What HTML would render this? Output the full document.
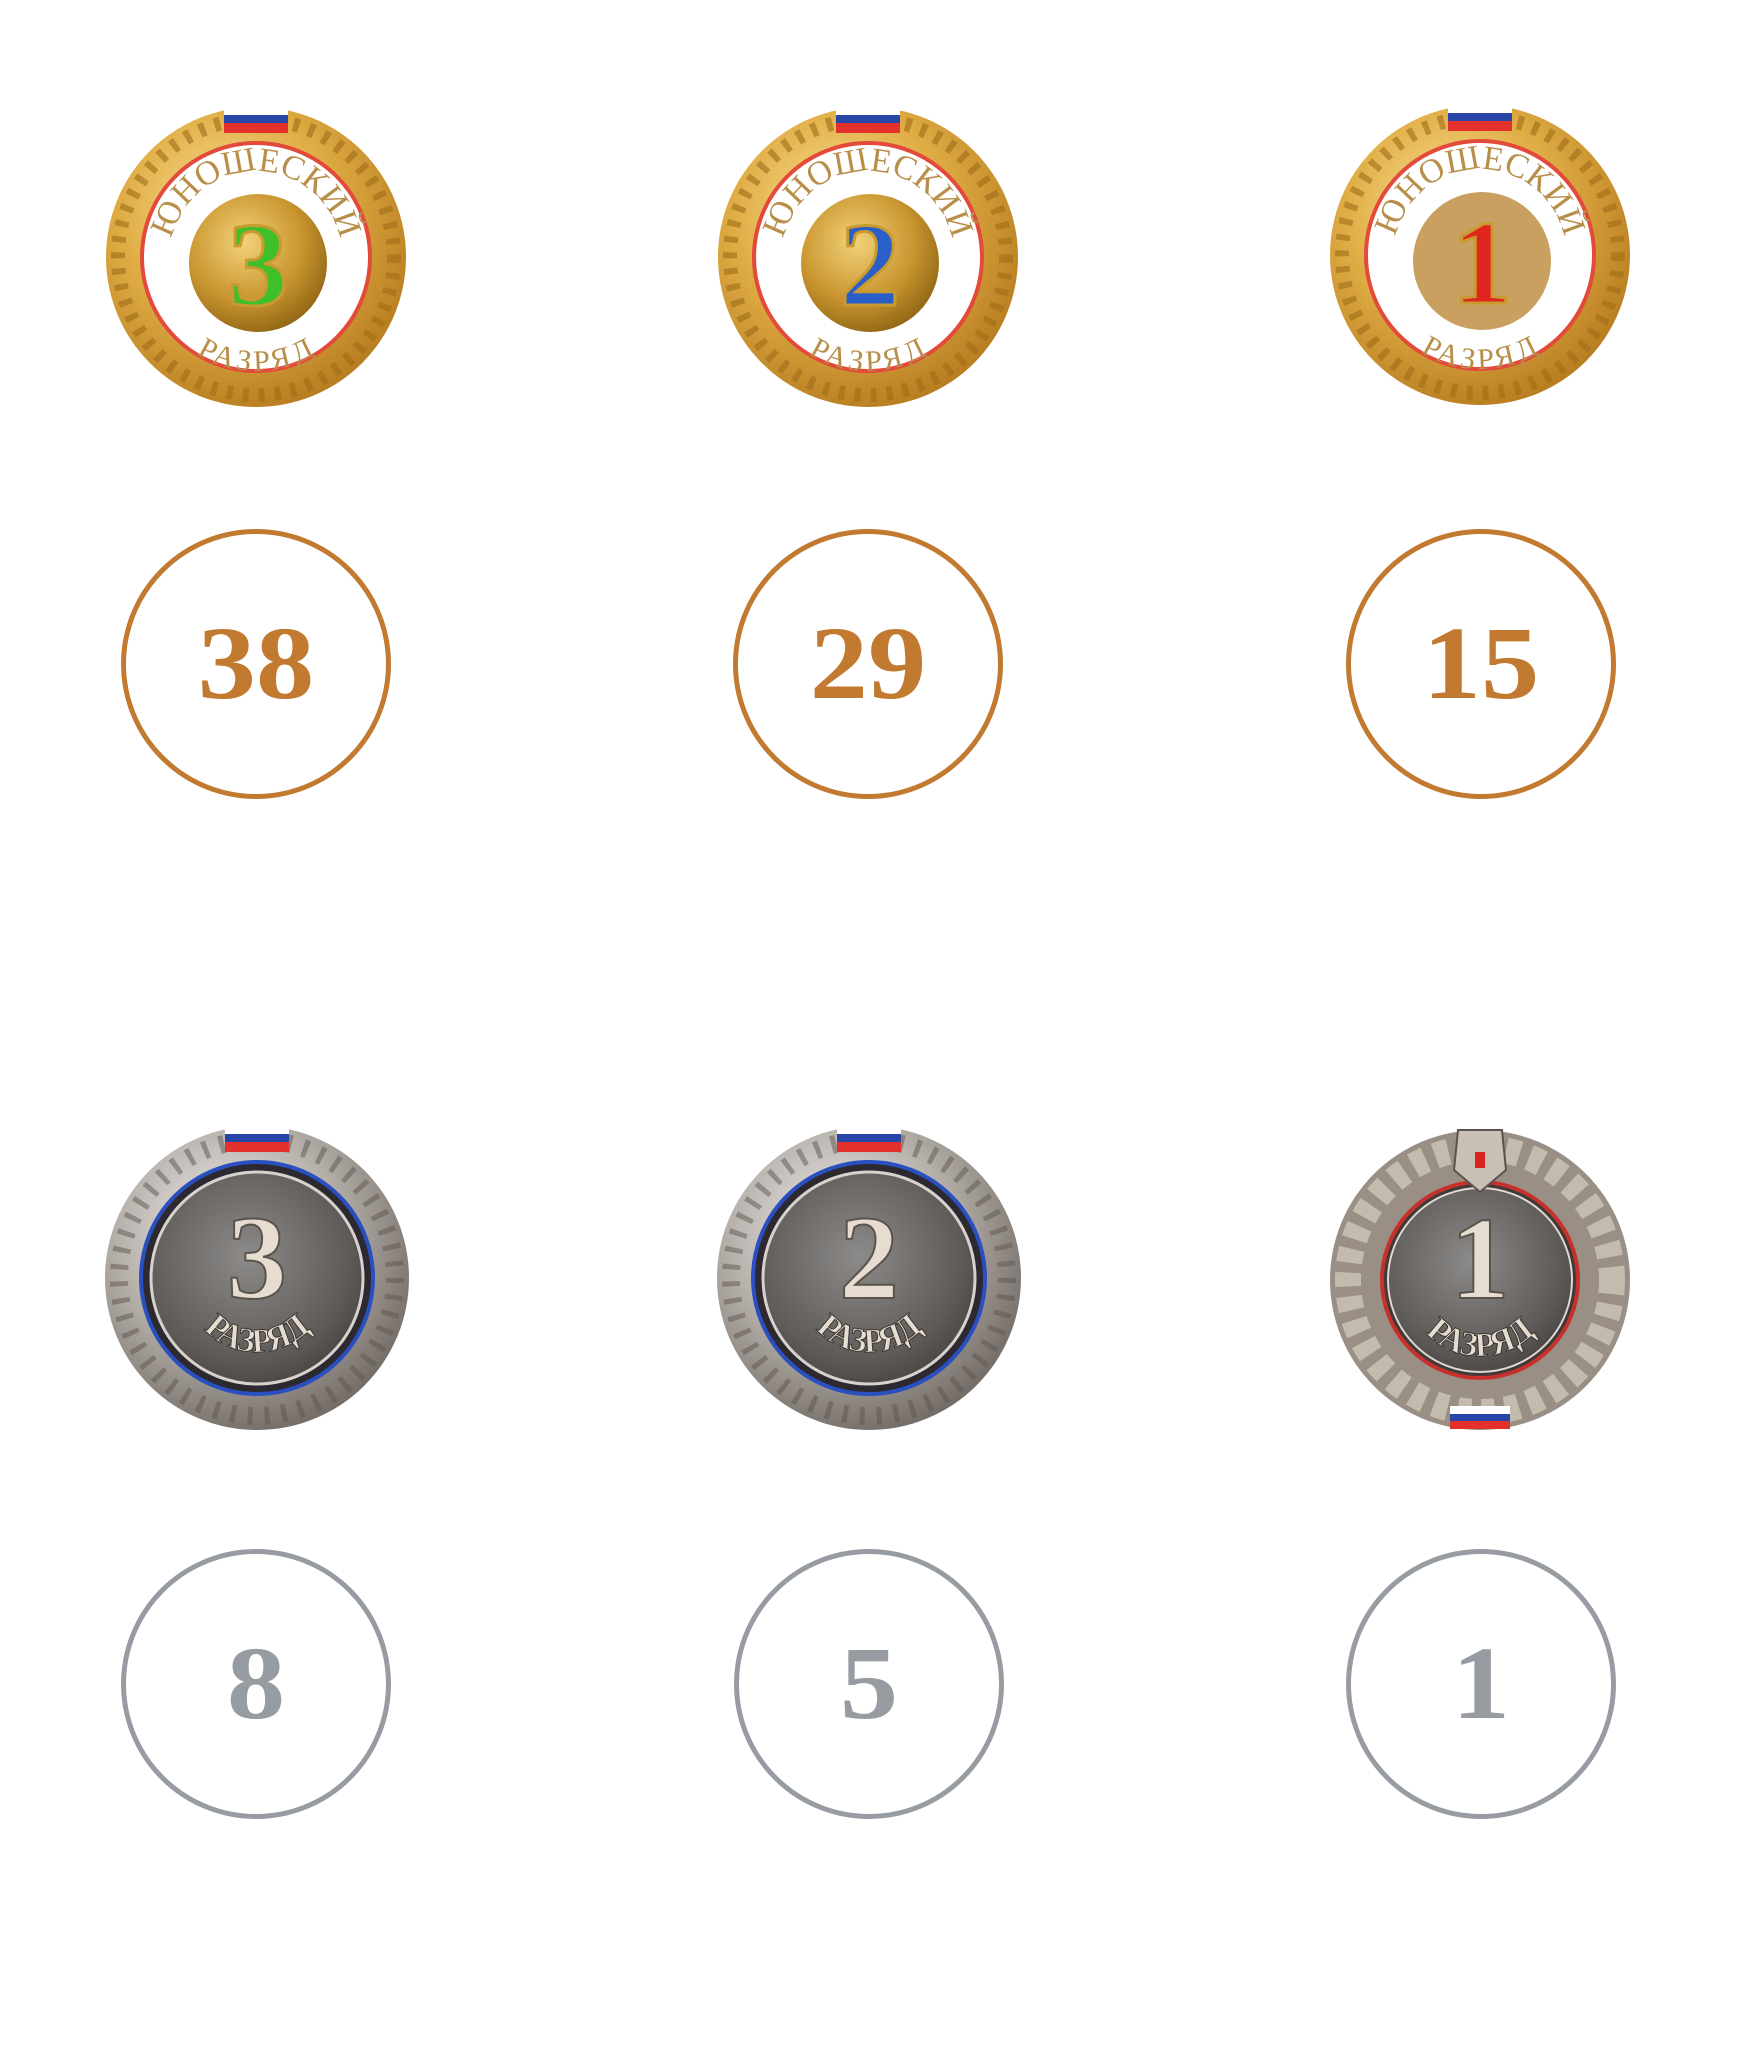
<!DOCTYPE html>
<html><head><meta charset="utf-8"><style>
html,body{margin:0;padding:0;background:#fff;width:1741px;height:2048px;overflow:hidden;position:relative;font-family:"Liberation Serif",serif}
.m{position:absolute;width:320px;height:320px}
.c{position:absolute;width:270px;height:270px;border-radius:50%;box-sizing:border-box;border:5px solid #c17a30;display:flex;align-items:center;justify-content:center;font-weight:bold;font-size:104px;color:#c17a30;line-height:1}
.c span{display:inline-block;transform:scaleX(1.12)}
.g{border-color:#979ca2;color:#979ca2}
</style></head><body>
<svg width="0" height="0" style="position:absolute">
<defs>
<radialGradient id="gold" cx="40%" cy="35%" r="70%"><stop offset="0" stop-color="#fbe39a"/><stop offset=".5" stop-color="#e0ad45"/><stop offset="1" stop-color="#b57a1e"/></radialGradient>
<radialGradient id="goldin" cx="40%" cy="35%" r="70%"><stop offset="0" stop-color="#f2d27a"/><stop offset=".6" stop-color="#c9952f"/><stop offset="1" stop-color="#8e6414"/></radialGradient>
<radialGradient id="silv" cx="40%" cy="35%" r="70%"><stop offset="0" stop-color="#f0eeec"/><stop offset=".5" stop-color="#b9b3ae"/><stop offset="1" stop-color="#6f6862"/></radialGradient>
<radialGradient id="silvin" cx="45%" cy="40%" r="70%"><stop offset="0" stop-color="#8d8b89"/><stop offset=".7" stop-color="#5d5a58"/><stop offset="1" stop-color="#3e3b39"/></radialGradient>
<path id="top" d="M-86,0 A86,86 0 0 1 86,0"/>
<path id="bot" d="M-92,0 A92,92 0 0 0 92,0"/>
<path id="bot2" d="M-78,0 A78,78 0 0 0 78,0"/>
</defs></svg>

<svg class="m" style="left:96px;top:97px" viewBox="-160 -160 320 320">
<circle r="150" fill="url(#gold)"/><circle r="138" fill="none" stroke="#a06c18" stroke-width="14" stroke-dasharray="6 10" opacity=".6"/>
<rect x="-32" y="-152" width="64" height="10" fill="#fff"/><rect x="-32" y="-142" width="64" height="8" fill="#2746a8"/><rect x="-32" y="-134" width="64" height="10" fill="#e3312c"/>
<circle r="114" fill="#fff" stroke="#e34a3a" stroke-width="4"/>
<circle cx="2" cy="6" r="69" fill="url(#goldin)"/>
<text x="2" y="48" text-anchor="middle" font-family="Liberation Serif" font-weight="bold" font-size="120" fill="#3fbf2a" stroke="#c99a30" stroke-width="3">3</text>
<text font-family="Liberation Serif" font-size="34" fill="#b88f4a" text-anchor="middle"><textPath href="#top" startOffset="50%">ЮНОШЕСКИЙ</textPath></text>
<text font-family="Liberation Serif" font-size="30" fill="#b88f4a" text-anchor="middle" dy="22"><textPath href="#bot" startOffset="50%">РАЗРЯД</textPath></text>
</svg>
<svg class="m" style="left:708px;top:97px" viewBox="-160 -160 320 320">
<circle r="150" fill="url(#gold)"/><circle r="138" fill="none" stroke="#a06c18" stroke-width="14" stroke-dasharray="6 10" opacity=".6"/>
<rect x="-32" y="-152" width="64" height="10" fill="#fff"/><rect x="-32" y="-142" width="64" height="8" fill="#2746a8"/><rect x="-32" y="-134" width="64" height="10" fill="#e3312c"/>
<circle r="114" fill="#fff" stroke="#e34a3a" stroke-width="4"/>
<circle cx="2" cy="6" r="69" fill="url(#goldin)"/>
<text x="2" y="48" text-anchor="middle" font-family="Liberation Serif" font-weight="bold" font-size="120" fill="#2a5fc8" stroke="#c99a30" stroke-width="3">2</text>
<text font-family="Liberation Serif" font-size="34" fill="#b88f4a" text-anchor="middle"><textPath href="#top" startOffset="50%">ЮНОШЕСКИЙ</textPath></text>
<text font-family="Liberation Serif" font-size="30" fill="#b88f4a" text-anchor="middle" dy="22"><textPath href="#bot" startOffset="50%">РАЗРЯД</textPath></text>
</svg>
<svg class="m" style="left:1320px;top:95px" viewBox="-160 -160 320 320">
<circle r="150" fill="url(#gold)"/><circle r="138" fill="none" stroke="#a06c18" stroke-width="14" stroke-dasharray="6 10" opacity=".6"/>
<rect x="-32" y="-152" width="64" height="10" fill="#fff"/><rect x="-32" y="-142" width="64" height="8" fill="#2746a8"/><rect x="-32" y="-134" width="64" height="10" fill="#e3312c"/>
<circle r="114" fill="#fff" stroke="#e34a3a" stroke-width="4"/>
<circle cx="2" cy="6" r="69" fill="#c9a060"/>
<text x="2" y="48" text-anchor="middle" font-family="Liberation Serif" font-weight="bold" font-size="120" fill="#e0251f" stroke="#c99a30" stroke-width="3">1</text>
<text font-family="Liberation Serif" font-size="34" fill="#b88f4a" text-anchor="middle"><textPath href="#top" startOffset="50%">ЮНОШЕСКИЙ</textPath></text>
<text font-family="Liberation Serif" font-size="30" fill="#b88f4a" text-anchor="middle" dy="22"><textPath href="#bot" startOffset="50%">РАЗРЯД</textPath></text>
</svg>

<div class="c" style="left:121px;top:529px"><span>38</span></div>
<div class="c" style="left:733px;top:529px"><span>29</span></div>
<div class="c" style="left:1346px;top:529px"><span>15</span></div>

<svg class="m" style="left:97px;top:1118px" viewBox="-160 -160 320 320">
<circle r="152" fill="url(#silv)"/><circle r="138" fill="none" stroke="#5e5650" stroke-width="18" stroke-dasharray="5 12" opacity=".5"/>
<rect x="-32" y="-154" width="64" height="10" fill="#fff"/><rect x="-32" y="-144" width="64" height="8" fill="#2746a8"/><rect x="-32" y="-136" width="64" height="10" fill="#e3312c"/>
<circle r="116" fill="#2c2a30" stroke="#2a4fc0" stroke-width="4"/>
<circle r="106" fill="url(#silvin)" stroke="#d8d2cc" stroke-width="3"/>
<text x="0" y="20" text-anchor="middle" font-family="Liberation Serif" font-weight="bold" font-size="120" fill="#e6ddd0" stroke="#5a534c" stroke-width="2">3</text>
<text font-family="Liberation Serif" font-weight="bold" font-size="34" fill="#e6ddd0" stroke="#3a3532" stroke-width="1" text-anchor="middle" dy="-4"><textPath href="#bot2" startOffset="50%">РАЗРЯД</textPath></text>
</svg>
<svg class="m" style="left:709px;top:1118px" viewBox="-160 -160 320 320">
<circle r="152" fill="url(#silv)"/><circle r="138" fill="none" stroke="#5e5650" stroke-width="18" stroke-dasharray="5 12" opacity=".5"/>
<rect x="-32" y="-154" width="64" height="10" fill="#fff"/><rect x="-32" y="-144" width="64" height="8" fill="#2746a8"/><rect x="-32" y="-136" width="64" height="10" fill="#e3312c"/>
<circle r="116" fill="#2c2a30" stroke="#2a4fc0" stroke-width="4"/>
<circle r="106" fill="url(#silvin)" stroke="#d8d2cc" stroke-width="3"/>
<text x="0" y="20" text-anchor="middle" font-family="Liberation Serif" font-weight="bold" font-size="120" fill="#e6ddd0" stroke="#5a534c" stroke-width="2">2</text>
<text font-family="Liberation Serif" font-weight="bold" font-size="34" fill="#e6ddd0" stroke="#3a3532" stroke-width="1" text-anchor="middle" dy="-4"><textPath href="#bot2" startOffset="50%">РАЗРЯД</textPath></text>
</svg>
<svg class="m" style="left:1320px;top:1120px" viewBox="-160 -160 320 320">
<circle r="150" fill="#9a8f84"/><circle r="132" fill="none" stroke="#d6cdc2" stroke-width="26" stroke-dasharray="14 10" opacity=".7"/>
<circle r="98" fill="#3e3a38" stroke="#c8302c" stroke-width="4"/>
<circle r="92" fill="url(#silvin)" stroke="#e0d8d0" stroke-width="2"/>
<path d="M-22,-150 L22,-150 L26,-110 L0,-88 L-26,-110Z" fill="#c9c0b6" stroke="#5a524c" stroke-width="2"/>
<rect x="-5" y="-128" width="10" height="16" fill="#d22"/>
<text x="0" y="18" text-anchor="middle" font-family="Liberation Serif" font-weight="bold" font-size="118" fill="#e6ddd0" stroke="#5a534c" stroke-width="2">1</text>
<text font-family="Liberation Serif" font-weight="bold" font-size="34" fill="#e6ddd0" stroke="#3a3532" stroke-width="1" text-anchor="middle" dy="-2"><textPath href="#bot2" startOffset="50%">РАЗРЯД</textPath></text>
<rect x="-30" y="126" width="60" height="8" fill="#fff"/><rect x="-30" y="134" width="60" height="7" fill="#2746a8"/><rect x="-30" y="141" width="60" height="8" fill="#e3312c"/>
</svg>

<div class="c g" style="left:121px;top:1549px"><span>8</span></div>
<div class="c g" style="left:734px;top:1549px"><span>5</span></div>
<div class="c g" style="left:1346px;top:1549px"><span>1</span></div>
</body></html>
